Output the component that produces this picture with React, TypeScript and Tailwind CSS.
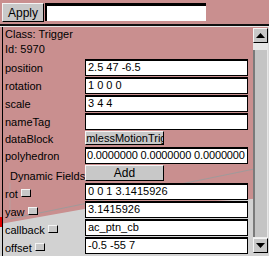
import React from "react";

const bevel =
  "bg-[#c8c8c8] border border-t-[#f4f4f4] border-l-[#f4f4f4] border-r-black border-b-black";

function Field({ value, tight }: { value: string; tight?: boolean }) {
  return (
    <div
      className={`h-[17px] w-[163px] bg-white border border-black border-t-2 text-[11px] leading-[13px] whitespace-nowrap overflow-hidden ${
        tight ? "pl-[1px] tracking-[-0.15px]" : "pl-[2px]"
      }`}
    >
      {value}
    </div>
  );
}

function Row({
  label,
  check,
  children,
}: {
  label: string;
  check?: boolean;
  children: React.ReactNode;
}) {
  return (
    <div className="flex h-[18px]">
      <div className="w-[82px] flex items-center pl-[2px]">
        <span className={check ? "pt-[4px]" : ""}>{label}</span>
        {check && <span className={`${bevel} ml-[3px] mt-[1px] w-[10px] h-[8px]`} />}
      </div>
      {children}
    </div>
  );
}

function Arrow({ up }: { up?: boolean }) {
  return (
    <div className={`${bevel} h-[15px] flex items-center justify-center`}>
      <svg width="9" height="5" viewBox="0 0 9 5">
        {up ? <polygon points="0,5 9,5 4.5,0" fill="black" /> : <polygon points="0,0 9,0 4.5,5" fill="black" />}
      </svg>
    </div>
  );
}

export default function App() {
  return (
    <div className="relative w-[269px] h-[256px] overflow-hidden bg-[#c98f8f] text-black text-[11px] font-['Liberation_Sans',Arial,sans-serif]">
      {/* scene behind the translucent inspector */}
      <svg className="absolute inset-0" width="269" height="256" viewBox="0 0 269 256">
        <polygon points="0,224 90,208 269,198 269,256 0,256" fill="#d2d2d2" />
        <line x1="10" y1="219" x2="269" y2="166" stroke="#a09a9a" strokeWidth="1.2" />
        <line x1="10" y1="183" x2="10" y2="219" stroke="#b8a0a0" strokeWidth="1" />
        <rect x="0" y="217" width="2" height="10" fill="#e00000" />
      </svg>

      <div className="relative flex flex-col h-full">
        {/* toolbar */}
        <div className="flex h-[24px] pt-[3px] pl-[2px]">
          <button className={`${bevel} w-[42px] h-[19px] text-[12px] leading-[16px] flex items-center justify-center`}>
            Apply
          </button>
          <div className="ml-[1px] w-[161px] h-[18px] bg-white border-t-[3px] border-l-2 border-black" />
        </div>
        <div className="h-[3px] border-t-2 border-[#101010] bg-[#e8e8e8]" />

        {/* inspector body */}
        <div className="flex flex-1 min-h-0">
          <div className="ml-[2px] w-[1px] bg-black" />
          <div className="flex-1 flex flex-col">
            <div className="h-[12px] flex items-center pl-[2px] pt-[2px]">Class: Trigger</div>
            <div className="h-[20px] flex items-center pl-[2px]">Id: 5970</div>
            <Row label="position">
              <Field value="2.5 47 -6.5" />
            </Row>
            <Row label="rotation">
              <Field value="1 0 0 0" />
            </Row>
            <Row label="scale">
              <Field value="3 4 4" />
            </Row>
            <Row label="nameTag">
              <Field value="" />
            </Row>
            <div className="flex h-[16px]">
              <div className="w-[82px] flex items-center pl-[2px]">dataBlock</div>
              <div className={`${bevel} w-[79px] h-[14px] flex justify-center items-center overflow-hidden whitespace-nowrap leading-[12px]`}>
                <span className="shrink-0">SeamlessMotionTrigger</span>
              </div>
            </div>
            <Row label="polyhedron">
              <Field value="0.0000000 0.0000000 0.0000000" tight />
            </Row>
            <div className="flex h-[18px]">
              <div className="w-[82px] flex items-end pl-[7px] whitespace-nowrap leading-[14px]">Dynamic Fields</div>
              <div className={`${bevel} w-[79px] h-[16px] flex items-center justify-center text-[12px]`}>Add</div>
            </div>
            <Row label="rot" check>
              <Field value="0 0 1 3.1415926" />
            </Row>
            <Row label="yaw" check>
              <Field value="3.1415926" />
            </Row>
            <Row label="callback" check>
              <Field value="ac_ptn_cb" />
            </Row>
            <Row label="offset" check>
              <Field value="-0.5 -55 7" />
            </Row>
          </div>

          {/* scrollbar */}
          <div className="w-[17px] flex flex-col pt-[1px] pb-[3px] pl-[1px] border-r border-[#d8d8d8]">
            <Arrow up />
            <div className="h-[7px] bg-[#e6e6e6]" />
            <div className="flex-1 bg-[#c4c4c4] border-l-2 border-[#7a7a7a] border-r border-r-[#e8e8e8]" />
            <div className="h-[1px] bg-[#eeeeee]" />
            <Arrow />
          </div>
        </div>
      </div>
    </div>
  );
}
